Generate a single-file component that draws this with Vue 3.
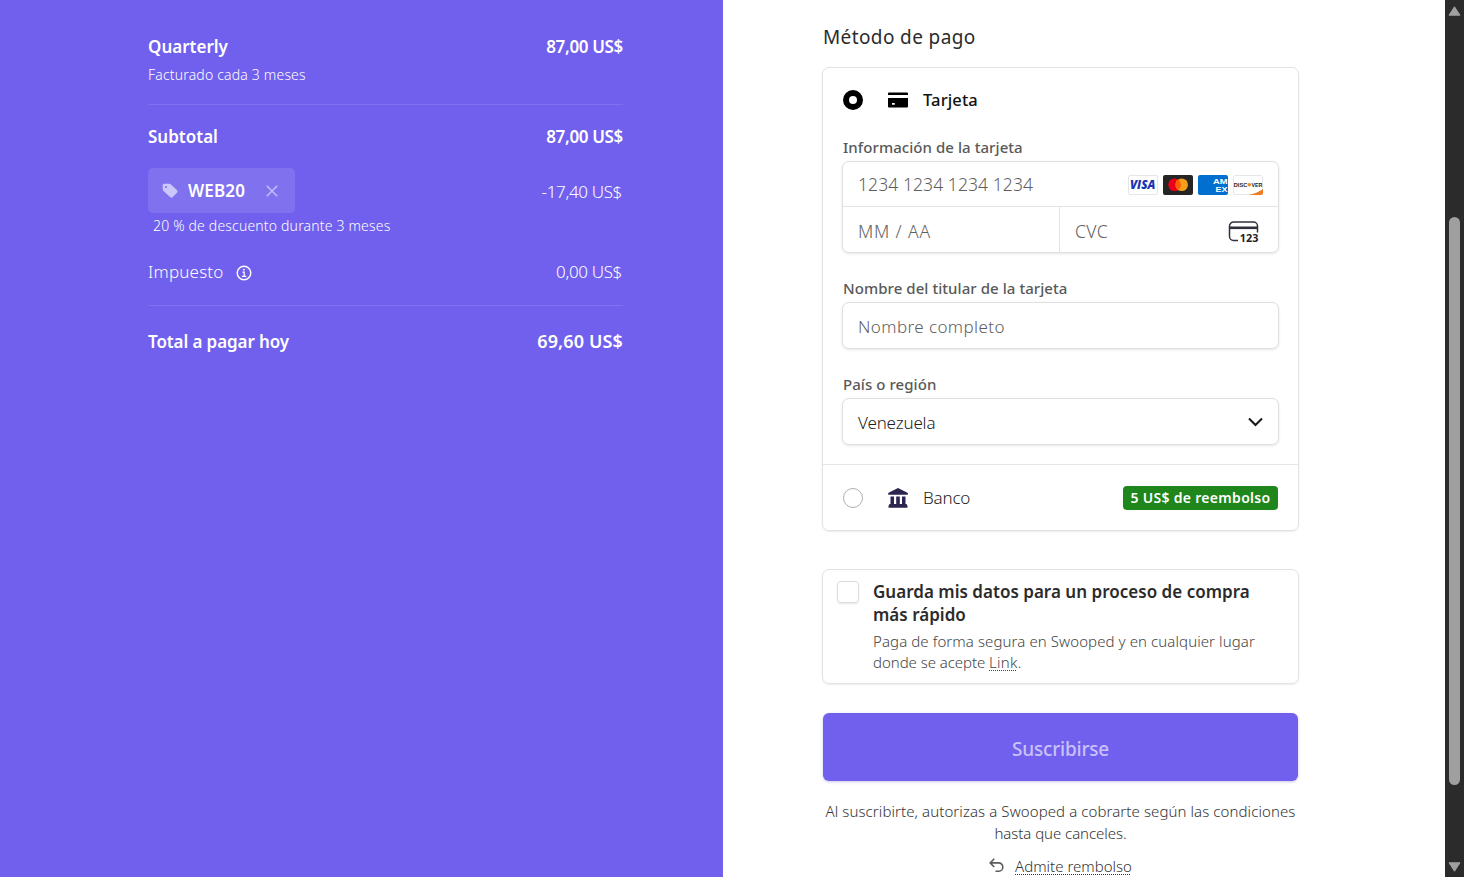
<script setup>
import { ref } from 'vue'

const method = ref('card')
const save = ref(false)
</script>

<template>
  <div class="page">
    <section class="summary">
      <div class="row plan">
        <span class="strong">Quarterly</span>
        <span class="strong amount">87,00 US$</span>
      </div>
      <div class="note billed">Facturado cada 3 meses</div>
      <hr class="rule" />
      <div class="row subtotal">
        <span class="strong">Subtotal</span>
        <span class="strong amount">87,00 US$</span>
      </div>
      <div class="row promo">
        <div class="coupon">
          <svg class="tag" width="16" height="16" viewBox="0 0 16 16">
            <path fill="currentColor" fill-rule="evenodd" d="M2 .7h5.2c.6 0 1 .2 1.4.6l6.300 5.700c.8.8.8 2 0 2.800l-4 4.300c-.8.8-2 .8-2.800 0L1.500 8C1 7.500.700 7 .700 6.300V2C.700 1.300 1.300.700 2 .700ZM4 2.900a1.100 1.100 0 1 0 0 2.200 1.100 1.100 0 0 0 0-2.200Z" />
          </svg>
          <span class="strong">WEB20</span>
          <svg class="remove" width="12" height="12" viewBox="0 0 12 12">
            <path d="M.8.8l10.400 10.400M11.200.8.8 11.200" stroke="currentColor" stroke-width="1.6" fill="none" />
          </svg>
        </div>
        <span class="light amount">-17,40 US$</span>
      </div>
      <div class="note discount">20 % de descuento durante 3 meses</div>
      <div class="row tax">
        <span class="light taxlabel">Impuesto
          <svg width="16" height="16" viewBox="0 0 16 16" fill="none" stroke="currentColor">
            <circle cx="8" cy="8" r="6.800" stroke-width="1.400" />
            <path d="M6.400 7.200h1.800v4M6 11.400h4.300" stroke-width="1.200" />
            <circle cx="7.900" cy="4.700" r=".9" fill="currentColor" stroke="none" />
          </svg>
        </span>
        <span class="light amount">0,00 US$</span>
      </div>
      <hr class="rule second" />
      <div class="row total">
        <span class="strong">Total a pagar hoy</span>
        <span class="strong due">69,60 US$</span>
      </div>
    </section>

    <main class="payment">
      <h2 class="heading">Método de pago</h2>

      <div class="panel methods">
        <div class="cardform">
          <div class="method">
            <span class="radio" :class="{ on: method === 'card' }"></span>
            <svg class="micon" width="20" height="16" viewBox="0 0 20 16">
              <path d="M0 3V1.500Q0 .5 1 .5h18q1 0 1 1V3zM0 6h20v8.500q0 1-1 1H1q-1 0-1-1zM4 11v1.800h2.800V11z" fill="#000" fill-rule="evenodd" />
            </svg>
            <span class="mname selected">Tarjeta</span>
          </div>

          <div class="label">Información de la tarjeta</div>
          <div class="fields">
            <div class="number">
              <span class="ph digits">1234 1234 1234 1234</span>
              <span class="brands">
                <svg width="30" height="20" viewBox="0 0 30 20">
                  <rect x=".5" y=".5" width="29" height="19" rx="1.500" fill="#fff" stroke="#e4e6ea" />
                  <text x="14.700" y="14" text-anchor="middle" textLength="25.500" lengthAdjust="spacingAndGlyphs" class="visa">VISA</text>
                </svg>
                <svg width="30" height="20" viewBox="0 0 30 20">
                  <rect width="30" height="20" rx="2" fill="#252525" />
                  <circle cx="11.500" cy="9.700" r="6.300" fill="#eb001b" />
                  <circle cx="18.700" cy="9.700" r="6.300" fill="#f79e1b" />
                  <path d="M15.100 4.500a6.300 6.300 0 0 1 0 10.400 6.300 6.300 0 0 1 0-10.400Z" fill="#ff5f00" />
                </svg>
                <svg width="30" height="20" viewBox="0 0 30 20">
                  <rect width="30" height="20" rx="2" fill="#016fd0" />
                  <text x="15" y="9.300" textLength="14.500" lengthAdjust="spacingAndGlyphs" class="amex">AM</text>
                  <text x="17.500" y="16.800" textLength="12" lengthAdjust="spacingAndGlyphs" class="amex">EX</text>
                </svg>
                <svg width="30" height="20" viewBox="0 0 30 20">
                  <rect x=".5" y=".5" width="29" height="19" rx="1.500" fill="#fff" stroke="#e4e6ea" />
                  <path d="M30 14v4a2 2 0 0 1-2 2H15.500C21 19 26 17 30 14Z" fill="#ef7b22" />
                  <text x=".8" y="11.800" textLength="13.400" lengthAdjust="spacingAndGlyphs" class="disc">DISC</text>
                  <circle cx="16.300" cy="9.700" r="1.800" fill="#f08a26" />
                  <text x="18.400" y="11.800" textLength="10.800" lengthAdjust="spacingAndGlyphs" class="disc">VER</text>
                </svg>
              </span>
            </div>
            <div class="pair">
              <div class="expiry"><span class="ph mm">MM / AA</span></div>
              <div class="cvc">
                <span class="ph cv">CVC</span>
                <svg width="31" height="22" viewBox="0 0 31 22">
                  <path d="M10 19.500H5.500a4 4 0 0 1-4-4V5a4 4 0 0 1 4-4h20a4 4 0 0 1 4 4v6.500" fill="none" stroke="#30313d" stroke-width="1.500" />
                  <path d="M1.500 6.800h28" stroke="#30313d" stroke-width="2.600" />
                  <text x="11.800" y="20.500" textLength="18.500" lengthAdjust="spacingAndGlyphs" class="code">123</text>
                </svg>
              </div>
            </div>
          </div>

          <div class="label holder">Nombre del titular de la tarjeta</div>
          <div class="input"><span class="ph name">Nombre completo</span></div>

          <div class="label country">País o región</div>
          <div class="input">
            <span class="value">Venezuela</span>
            <svg width="15" height="10" viewBox="0 0 15 10">
              <path d="M1 1.500 7.500 8 14 1.500" fill="none" stroke="#1a1a1a" stroke-width="2.100" />
            </svg>
          </div>
        </div>

        <div class="bank">
          <span class="radio" :class="{ on: method === 'bank' }"></span>
          <svg class="micon" width="20" height="20" viewBox="0 0 20 20" fill="#2c2550">
            <path d="M10 0 19 4.600q1 .5 1 1.400t-1 .8H1Q0 6.800 0 6t1-1.400zM2.500 8.500H6V16H2.500zM8.200 8.500h3.600V16H8.200zM14 8.500h3.500V16H14zM1.500 16h17l1 2q.5 1.800-.5 1.800H1q-1 0-.500-1.800z" />
          </svg>
          <span class="mname">Banco</span>
          <span class="badge">5 US$ de reembolso</span>
        </div>
      </div>

      <div class="panel save">
        <span class="check" :class="{ on: save }"></span>
        <div>
          <div class="savetitle">Guarda mis datos para un proceso de compra <br />más rápido</div>
          <div class="savetext">Paga de forma segura en Swooped y en cualquier lugar <br /><span class="tight">donde se acepte <a class="dotted link">Link</a>.</span></div>
        </div>
      </div>

      <button class="submit">Suscribirse</button>

      <p class="terms">Al suscribirte, autorizas a Swooped a cobrarte según las condiciones<br /><span class="tight">hasta que canceles.</span></p>
      <div class="refund">
        <svg width="15" height="15" viewBox="0 0 15 15" fill="none" stroke="#5c5c5c" stroke-width="1.600">
          <path d="M5.200.8 1.200 4.900l4 4.100M1.200 4.900h8.600a4 4 0 0 1 4 4v.3a4 4 0 0 1-4 4H6.500" />
        </svg>
        <a class="dotted">Admite rembolso</a>
      </div>
    </main>

    <aside class="scrollbar">
      <svg width="13" height="10" viewBox="0 0 13 10"><path d="M6.500.8 12 9.200H1z" fill="#a0a0a0" stroke="#a0a0a0" stroke-linejoin="round" /></svg>
      <div class="thumb"></div>
      <svg class="down" width="13" height="10" viewBox="0 0 13 10"><path d="M6.500 9.200 12 .8H1z" fill="#a0a0a0" stroke="#a0a0a0" stroke-linejoin="round" /></svg>
    </aside>
  </div>
</template>

<style>
body {
  background: #fff;
  overflow: hidden;
}
</style>

<style scoped>
.page {
  display: flex;
  width: 1464px;
  height: 877px;
  overflow: hidden;
  background: #fff;
  font-family: 'Noto Sans', 'Open Sans', sans-serif;
}
.page * {
  box-sizing: border-box;
}
svg {
  display: block;
  flex: none;
}

/* Order summary */
.summary {
  width: 723px;
  padding: 34px 100px 0 148px;
  background: #7160ed;
  color: #fff;
  white-space: nowrap;
}
.row {
  display: flex;
  justify-content: space-between;
  align-items: center;
  height: 24px;
}
.strong {
  font-size: 17px;
  font-weight: 600;
}
.light {
  font-size: 17px;
  font-weight: 300;
}
.amount {
  letter-spacing: -0.34px;
}
.note {
  height: 20px;
  line-height: 20px;
  font-size: 14px;
  font-weight: 350;
  letter-spacing: 0.18px;
}
.billed {
  margin-top: 7px;
}
.rule {
  height: 1px;
  margin: 19px 0 0;
  border: 0;
  background: #8070f2;
}
.subtotal {
  margin-top: 19px;
}
.promo {
  height: 45px;
  margin-top: 20px;
}
.promo .amount {
  margin-top: 1px;
  margin-right: 1px;
}
.coupon {
  display: flex;
  align-items: center;
  width: 147px;
  height: 45px;
  padding-left: 14px;
  border-radius: 5px;
  background: #8071ee;
}
.tag {
  margin-right: 10px;
  color: #cdc6fa;
}
.coupon .strong {
  width: 78px;
  letter-spacing: 0.13px;
}
.remove {
  color: #c3bbf8;
}
.discount {
  margin: 3px 0 0 5px;
}
.tax {
  margin-top: 23px;
}
.tax .amount {
  margin-right: 1px;
}
.taxlabel {
  display: flex;
  align-items: center;
  gap: 12px;
  letter-spacing: 0.2px;
}
.taxlabel svg {
  margin-top: 3px;
}
.rule.second {
  margin-top: 22px;
}
.total {
  margin-top: 23px;
}
.total .strong {
  letter-spacing: -0.1px;
}
.total .due {
  font-size: 18px;
  letter-spacing: 0.14px;
}

/* Payment form */
.payment {
  width: 722px;
  padding: 23px 146px 0 99px;
}
.heading {
  margin: 0 0 16px 1px;
  height: 28px;
  font-size: 19px;
  line-height: 28px;
  font-weight: 450;
  letter-spacing: 0.38px;
  color: #2b2b2b;
}
.panel {
  border: 1px solid #e2e2e2;
  border-radius: 7px;
  box-shadow: 0 1px 2px rgba(0, 0, 0, 0.08);
}
.methods {
  height: 464px;
}
.cardform {
  height: 397px;
  padding: 20px 19px 0;
  border-bottom: 1px solid #e6e6e6;
}
.method,
.bank {
  display: flex;
  align-items: center;
}
.method {
  height: 24px;
}
.radio {
  width: 20px;
  height: 20px;
  margin: 0 25px 0 1px;
  border: 1.5px solid #b0b0b0;
  border-radius: 50%;
  background: #fff;
}
.radio.on {
  border: 6px solid #000;
}
.micon {
  margin-right: 15px;
}
.mname {
  margin-bottom: 2px;
  font-size: 17px;
  font-weight: 350;
  letter-spacing: -0.2px;
  color: #222;
}
.mname.selected {
  font-size: 16.5px;
  font-weight: 500;
  letter-spacing: 0.12px;
  color: #111;
}
.label {
  height: 22px;
  margin: 24px 0 3px 1px;
  font-size: 15px;
  line-height: 22px;
  font-weight: 550;
  letter-spacing: 0.06px;
  color: #595959;
}
.fields,
.input {
  border: 1px solid #e0e0e0;
  border-radius: 7px;
  box-shadow: 0 1px 3px rgba(0, 0, 0, 0.1);
  background: #fff;
}
.fields {
  height: 92px;
}
.number,
.expiry,
.cvc,
.input {
  display: flex;
  align-items: center;
  justify-content: space-between;
  padding: 0 15px;
}
.number {
  height: 45px;
  border-bottom: 1px solid #e3e3e3;
}
.brands {
  display: flex;
  gap: 5px;
  margin-top: 1px;
}
.pair {
  display: flex;
  height: 45px;
}
.expiry {
  width: 217px;
  padding-top: 2px;
  border-right: 1px solid #e3e3e3;
}
.cvc {
  flex: 1;
  padding: 2px 19px 0 15px;
}
.cvc svg {
  margin-top: 2px;
}
.ph {
  font-size: 17.5px;
  font-weight: 300;
  color: #5e5e5e;
}
.digits {
  letter-spacing: 0.08px;
}
.mm {
  letter-spacing: 0.85px;
}
.cv {
  letter-spacing: 0.4px;
}
.ph.name {
  margin-top: 2px;
  font-size: 17px;
  letter-spacing: 0.42px;
}
.holder,
.country {
  margin-top: 24px;
}
.input {
  height: 47px;
}
.value {
  margin-top: 2px;
  font-size: 17px;
  font-weight: 350;
  letter-spacing: -0.15px;
  color: #222;
}
.input svg {
  margin-top: 1px;
}
.bank {
  height: 65px;
  padding: 1px 20px 0 19px;
}
.badge {
  width: 155px;
  height: 24px;
  margin-left: auto;
  border-radius: 4px;
  background: #1e861a;
  color: #fff;
  font-size: 14px;
  line-height: 23px;
  font-weight: 650;
  letter-spacing: 0.3px;
  text-align: center;
  white-space: nowrap;
}
.visa {
  font: italic 800 12px 'Open Sans', sans-serif;
  fill: #1a34b0;
}
.amex {
  font: 700 6.800px 'Liberation Sans', sans-serif;
  fill: #fff;
}
.disc {
  font: 700 5.800px 'Liberation Sans', sans-serif;
  fill: #1d1d1d;
}
.code {
  font: 700 10.500px 'Open Sans', sans-serif;
  fill: #222;
}

/* Save details */
.save {
  display: flex;
  height: 115px;
  margin-top: 38px;
  padding: 10px 0 0 14px;
  white-space: nowrap;
}
.check {
  flex: none;
  width: 22px;
  height: 22px;
  margin: 1px 14px 0 0;
  border: 1px solid #dcdcdc;
  border-radius: 4px;
  box-shadow: 0 1px 2px rgba(0, 0, 0, 0.1);
}
.check.on {
  background: #7160ed;
}
.savetitle {
  font-size: 17px;
  line-height: 23px;
  font-weight: 600;
  letter-spacing: 0.02px;
  color: #2b2b2b;
}
.savetext {
  margin-top: 5px;
  font-size: 15px;
  line-height: 21px;
  font-weight: 300;
  letter-spacing: 0.09px;
  color: #454545;
}
.tight {
  letter-spacing: -0.05px;
}
.link {
  letter-spacing: 0.25px;
}
.dotted {
  text-decoration: underline dotted;
  text-decoration-thickness: 1px;
  text-underline-offset: 2px;
}

.submit {
  display: block;
  width: 475px;
  height: 68px;
  margin: 29px 0 0 1px;
  padding: 4px 0 0;
  border: 0;
  border-radius: 6px;
  background: #7160ed;
  box-shadow: 0 1px 3px rgba(80, 70, 180, 0.3);
  color: #c9c1f9;
  font: 500 19px 'Noto Sans', sans-serif;
  letter-spacing: -0.2px;
}
.terms {
  margin: 19px 0 0;
  font-size: 15px;
  line-height: 22px;
  font-weight: 300;
  letter-spacing: 0.09px;
  text-align: center;
  white-space: nowrap;
  color: #333;
}
.refund {
  display: flex;
  justify-content: center;
  align-items: center;
  gap: 11px;
  height: 22px;
  margin-top: 11px;
  font-size: 15px;
  font-weight: 300;
  color: #333;
}
.refund svg {
  margin-bottom: 1px;
}

/* Window scrollbar */
.scrollbar {
  display: flex;
  flex-direction: column;
  align-items: center;
  width: 19px;
  padding: 6px 0 5px;
  background: #2b2b2b;
}
.thumb {
  width: 11px;
  height: 568px;
  margin-top: 201px;
  border-radius: 6px;
  background: #9f9f9f;
}
.down {
  margin-top: auto;
}
</style>
